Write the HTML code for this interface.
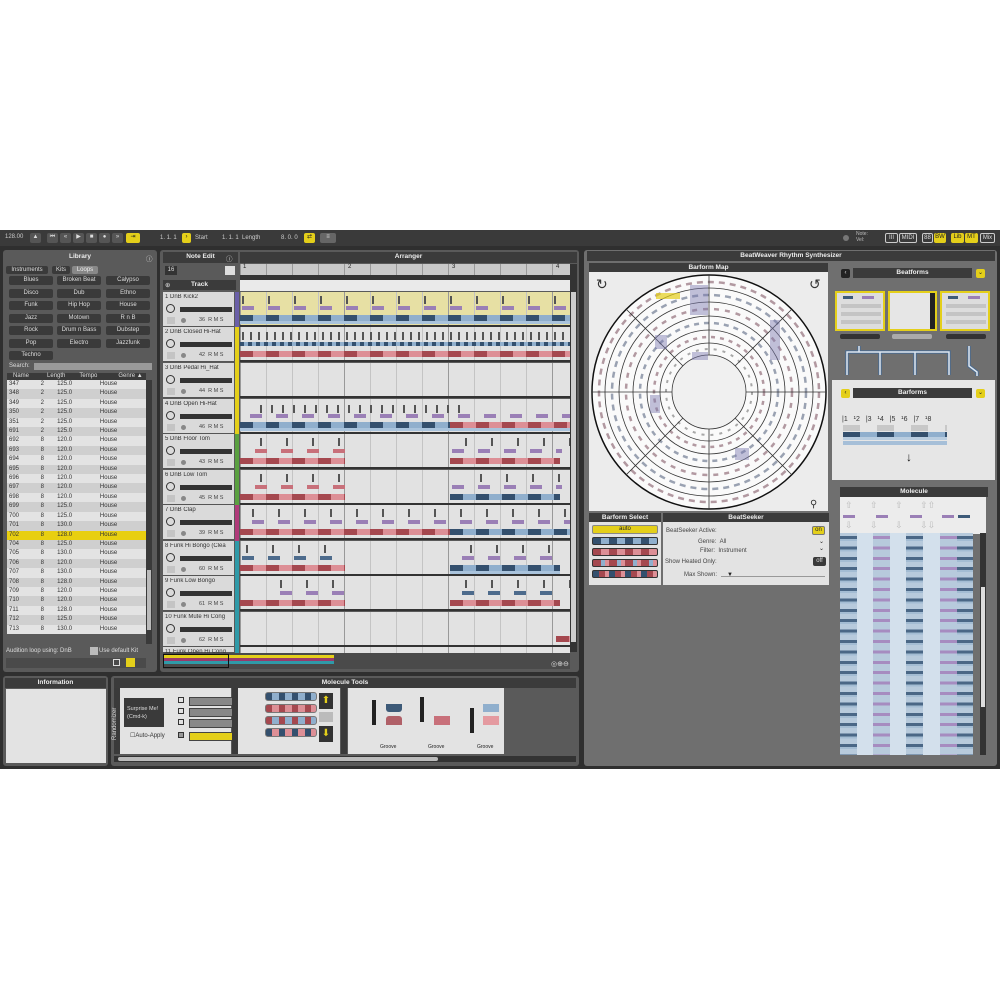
<!DOCTYPE html>
<html><head><meta charset="utf-8"><style>
*{margin:0;padding:0;box-sizing:border-box}
body{width:1000px;height:1000px;background:#fff;position:relative;overflow:hidden;font-family:"Liberation Sans",sans-serif;font-size:6.5px;color:#222}
.a{position:absolute}
.hd{position:absolute;background:#3b3b3b;color:#eee;font-weight:bold;text-align:center;font-size:6.5px;line-height:10px}
.btn{position:absolute;background:#3a3a3a;color:#ddd;text-align:center;font-size:6px;line-height:9px;border-radius:2px}
.y{background:#e4cf1a;color:#222}
.tr{position:absolute;left:163px;width:71px;height:35px;background:#dadada;border-bottom:1px solid #555}
.tr .n{position:absolute;left:2px;top:2px;font-size:6px;color:#333;white-space:nowrap;overflow:hidden;width:62px}
.tr .k{position:absolute;left:3px;top:12px;width:9px;height:9px;border:1.5px solid #333;border-radius:50%}
.tr .s{position:absolute;left:17px;top:15px;width:52px;height:5px;background:#333}
.tr .sq{position:absolute;left:4px;top:25px;width:8px;height:7px;background:#c4c4c4}
.tr .d{position:absolute;left:18px;top:26px;width:5px;height:5px;border-radius:50%;background:#888}
.tr .r{position:absolute;left:36px;top:25px;font-size:5.5px;color:#444}
.row{position:absolute;left:240px;width:330px;height:35px;background:#e2e2e2;border-bottom:2px solid #333;overflow:hidden}
.g{position:absolute;inset:0;background:repeating-linear-gradient(90deg,#999 0 1px,transparent 1px 104px),repeating-linear-gradient(90deg,#c4c4c4 0 1px,transparent 1px 26px)}
.st{position:absolute;height:6px}
.bl{background:repeating-linear-gradient(90deg,#34506e 0 13px,#90afcd 13px 26px)}
.pk{background:repeating-linear-gradient(90deg,#a5484f 0 13px,#dd8f96 13px 26px)}
.pu{position:absolute;height:4px;background:repeating-linear-gradient(90deg,#9a7fb6 0 12px,transparent 12px 26px)}
.tk{position:absolute;height:8px;background:repeating-linear-gradient(90deg,#555 0 2px,transparent 2px 26px)}
.lib td{padding:0 2px;height:9.4px;line-height:9.4px;font-size:6px;color:#333}
.lib tr:nth-child(odd){background:#e3e3e3}.lib tr:nth-child(even){background:#cfcfcf}
.mc{position:absolute;top:533px;height:222px;background:repeating-linear-gradient(180deg,transparent 0 3px,#4a6786 3px 6px,#a3bcd3 6px 8px,transparent 8px 10.4px) #b7cadc}
.mp{background:repeating-linear-gradient(180deg,transparent 0 3px,#a68cc0 3px 6px,transparent 6px 10.4px) #b7cadc}
</style></head><body>
<div class="a" style="left:0;top:230px;width:1000px;height:539px;background:#2f2f2f"></div>
<div class="a" style="left:0;top:230px;width:1000px;height:16px;background:#3a3a3a"></div>
<div class="a" style="left:5px;top:234px;color:#ccc;font-size:6px">128.00</div>
<div class="btn" style="left:30px;top:233px;width:11px;height:10px;background:#555">▲</div>
<div class="btn" style="left:47px;top:233px;width:11px;height:10px;background:#555">⏮</div>
<div class="btn" style="left:60px;top:233px;width:11px;height:10px;background:#555">«</div>
<div class="btn" style="left:73px;top:233px;width:11px;height:10px;background:#555">▶</div>
<div class="btn" style="left:86px;top:233px;width:11px;height:10px;background:#555">■</div>
<div class="btn" style="left:99px;top:233px;width:11px;height:10px;background:#555">●</div>
<div class="btn" style="left:112px;top:233px;width:11px;height:10px;background:#555">»</div>
<div class="btn y" style="left:126px;top:233px;width:14px;height:10px">⇥</div>
<div class="a" style="left:160px;top:235px;color:#ccc;font-size:6px">1. 1. 1</div>
<div class="btn y" style="left:182px;top:233px;width:9px;height:10px">›</div>
<div class="a" style="left:195px;top:235px;color:#ccc;font-size:6px">Start</div>
<div class="a" style="left:222px;top:235px;color:#ccc;font-size:6px">1. 1. 1 &nbsp;Length</div>
<div class="a" style="left:281px;top:235px;color:#ccc;font-size:6px">8. 0. 0</div>
<div class="btn y" style="left:304px;top:233px;width:11px;height:10px">⇄</div>
<div class="btn" style="left:320px;top:233px;width:16px;height:10px;background:#666">≡</div>
<div class="a" style="left:843px;top:235px;width:6px;height:6px;border-radius:50%;background:#777"></div>
<div class="a" style="left:856px;top:231px;color:#bbb;font-size:5px;line-height:6px">Note:<br>Vel:</div>
<div class="btn" style="left:885px;top:233px;width:13px;height:10px;border:1px solid #ccc">III</div>
<div class="btn" style="left:899px;top:233px;width:18px;height:10px;border:1px solid #ccc">MIDI</div>
<div class="btn" style="left:922px;top:233px;width:11px;height:10px;border:1px solid #ccc">88</div>
<div class="btn y" style="left:934px;top:233px;width:12px;height:10px">BW</div>
<div class="btn y" style="left:951px;top:233px;width:13px;height:10px">Lib</div>
<div class="btn y" style="left:965px;top:233px;width:13px;height:10px">MT</div>
<div class="btn" style="left:980px;top:233px;width:15px;height:10px;border:1px solid #ccc">Mix</div>

<div class="a" style="left:3px;top:250px;width:154px;height:422px;background:#5a5a5a;border-radius:3px"></div>
<div class="hd" style="left:5px;top:252px;width:150px;height:11px;background:#5a5a5a">Library</div>
<div class="a" style="left:146px;top:253px;color:#ddd">ⓘ</div>
<div class="btn" style="left:6px;top:266px;width:42px;height:8px;line-height:8px">Instruments</div>
<div class="btn" style="left:52px;top:266px;width:18px;height:8px;line-height:8px">Kits</div>
<div class="btn" style="left:72px;top:266px;width:26px;height:8px;line-height:8px;background:#888;color:#eee">Loops</div>
<div class="btn" style="left:9px;top:276px;width:44px;height:9px">Blues</div>
<div class="btn" style="left:57px;top:276px;width:44px;height:9px">Broken Beat</div>
<div class="btn" style="left:106px;top:276px;width:44px;height:9px">Calypso</div>
<div class="btn" style="left:9px;top:289px;width:44px;height:9px">Disco</div>
<div class="btn" style="left:57px;top:289px;width:44px;height:9px">Dub</div>
<div class="btn" style="left:106px;top:289px;width:44px;height:9px">Ethno</div>
<div class="btn" style="left:9px;top:301px;width:44px;height:9px">Funk</div>
<div class="btn" style="left:57px;top:301px;width:44px;height:9px">Hip Hop</div>
<div class="btn" style="left:106px;top:301px;width:44px;height:9px">House</div>
<div class="btn" style="left:9px;top:314px;width:44px;height:9px">Jazz</div>
<div class="btn" style="left:57px;top:314px;width:44px;height:9px">Motown</div>
<div class="btn" style="left:106px;top:314px;width:44px;height:9px">R n B</div>
<div class="btn" style="left:9px;top:326px;width:44px;height:9px">Rock</div>
<div class="btn" style="left:57px;top:326px;width:44px;height:9px">Drum n Bass</div>
<div class="btn" style="left:106px;top:326px;width:44px;height:9px">Dubstep</div>
<div class="btn" style="left:9px;top:339px;width:44px;height:9px">Pop</div>
<div class="btn" style="left:57px;top:339px;width:44px;height:9px">Electro</div>
<div class="btn" style="left:106px;top:339px;width:44px;height:9px">Jazzfunk</div>
<div class="btn" style="left:9px;top:351px;width:44px;height:9px">Techno</div>
<div class="a" style="left:9px;top:363px;color:#ddd;font-size:6px">Search:</div>
<div class="a" style="left:34px;top:363px;width:118px;height:7px;background:#999"></div>
<div class="a" style="left:7px;top:373px;width:139px;height:7px;background:#3a3a3a;color:#ddd;font-size:6px;line-height:7px"><span style="margin-left:6px">Name</span><span style="margin-left:18px">Length</span><span style="margin-left:14px">Tempo</span><span style="margin-left:21px">Genre ▲</span></div>
<table class="lib a" style="left:7px;top:380px;width:139px;border-collapse:collapse">
<tr><td>347</td><td>2</td><td>125.0</td><td>House</td></tr>
<tr><td>348</td><td>2</td><td>125.0</td><td>House</td></tr>
<tr><td>349</td><td>2</td><td>125.0</td><td>House</td></tr>
<tr><td>350</td><td>2</td><td>125.0</td><td>House</td></tr>
<tr><td>351</td><td>2</td><td>125.0</td><td>House</td></tr>
<tr><td>691</td><td>2</td><td>125.0</td><td>House</td></tr>
<tr><td>692</td><td>8</td><td>120.0</td><td>House</td></tr>
<tr><td>693</td><td>8</td><td>120.0</td><td>House</td></tr>
<tr><td>694</td><td>8</td><td>120.0</td><td>House</td></tr>
<tr><td>695</td><td>8</td><td>120.0</td><td>House</td></tr>
<tr><td>696</td><td>8</td><td>120.0</td><td>House</td></tr>
<tr><td>697</td><td>8</td><td>120.0</td><td>House</td></tr>
<tr><td>698</td><td>8</td><td>120.0</td><td>House</td></tr>
<tr><td>699</td><td>8</td><td>125.0</td><td>House</td></tr>
<tr><td>700</td><td>8</td><td>125.0</td><td>House</td></tr>
<tr><td>701</td><td>8</td><td>130.0</td><td>House</td></tr>
<tr style="background:#e8cf10"><td>702</td><td>8</td><td>128.0</td><td>House</td></tr>
<tr><td>704</td><td>8</td><td>125.0</td><td>House</td></tr>
<tr><td>705</td><td>8</td><td>130.0</td><td>House</td></tr>
<tr><td>706</td><td>8</td><td>120.0</td><td>House</td></tr>
<tr><td>707</td><td>8</td><td>130.0</td><td>House</td></tr>
<tr><td>708</td><td>8</td><td>128.0</td><td>House</td></tr>
<tr><td>709</td><td>8</td><td>120.0</td><td>House</td></tr>
<tr><td>710</td><td>8</td><td>120.0</td><td>House</td></tr>
<tr><td>711</td><td>8</td><td>128.0</td><td>House</td></tr>
<tr><td>712</td><td>8</td><td>125.0</td><td>House</td></tr>
<tr><td>713</td><td>8</td><td>130.0</td><td>House</td></tr>
</table>
<div class="a" style="left:146px;top:380px;width:6px;height:264px;background:#3a3a3a"></div>
<div class="a" style="left:147px;top:570px;width:4px;height:60px;background:#bbb"></div>
<div class="a" style="left:6px;top:648px;color:#ddd;font-size:6px">Audition loop using: DnB</div>
<div class="a" style="left:90px;top:647px;width:8px;height:8px;background:#bbb"></div>
<div class="a" style="left:99px;top:648px;color:#ddd;font-size:6px">Use default Kit</div>
<div class="a" style="left:6px;top:658px;width:140px;height:10px;background:#4a4a4a"></div>
<div class="a" style="left:113px;top:659px;width:7px;height:7px;border:1px solid #ddd"></div>
<div class="a" style="left:126px;top:658px;width:9px;height:9px;background:#e4cf1a"></div>

<div class="a" style="left:160px;top:250px;width:419px;height:422px;background:#5a5a5a;border-radius:3px"></div>
<div class="hd" style="left:163px;top:252px;width:75px;height:11px">Note Edit</div>
<div class="hd" style="left:240px;top:252px;width:337px;height:11px">Arranger</div>
<div class="a" style="left:226px;top:253px;color:#ddd">ⓘ</div>
<div class="a" style="left:165px;top:266px;width:12px;height:9px;background:#333;color:#ddd;font-size:6px;text-align:center;line-height:9px">16</div>
<div class="a" style="left:225px;top:266px;width:10px;height:9px;background:#ddd"></div>
<div class="hd" style="left:163px;top:280px;width:73px;height:10px">Track</div>
<div class="a" style="left:165px;top:281px;color:#ddd">⊕</div>
<div class="a" style="left:240px;top:264px;width:330px;height:11px;background:repeating-linear-gradient(90deg,#999 0 1px,transparent 1px 26px) #c8c8c8"></div>
<div class="a" style="left:243px;top:264px;font-size:6px">1</div><div class="a" style="left:348px;top:264px;font-size:6px">2</div><div class="a" style="left:452px;top:264px;font-size:6px">3</div><div class="a" style="left:556px;top:264px;font-size:6px">4</div>
<div class="a" style="left:240px;top:275px;width:330px;height:5px;background:#333"></div>
<div class="a" style="left:240px;top:280px;width:330px;height:11px;background:#eaeaea"></div>
<div class="a" style="left:570px;top:264px;width:7px;height:388px;background:#333"></div>
<div class="a" style="left:571px;top:292px;width:5px;height:350px;background:#ccc"></div>

<div class="tr" style="top:292px"><div class="n">1 DnB Kick2</div><div class="k"></div><div class="s"></div><div class="sq"></div><div class="d"></div><div class="r">36 &nbsp;R M S</div></div>
<div class="tr" style="top:327px"><div class="n">2 DnB Closed Hi-Hat</div><div class="k"></div><div class="s"></div><div class="sq"></div><div class="d"></div><div class="r">42 &nbsp;R M S</div></div>
<div class="tr" style="top:363px"><div class="n">3 DnB Pedal Hi_Hat</div><div class="k"></div><div class="s"></div><div class="sq"></div><div class="d"></div><div class="r">44 &nbsp;R M S</div></div>
<div class="tr" style="top:399px"><div class="n">4 DnB Open Hi-Hat</div><div class="k"></div><div class="s"></div><div class="sq"></div><div class="d"></div><div class="r">46 &nbsp;R M S</div></div>
<div class="tr" style="top:434px"><div class="n">5 DnB Floor Tom</div><div class="k"></div><div class="s"></div><div class="sq"></div><div class="d"></div><div class="r">43 &nbsp;R M S</div></div>
<div class="tr" style="top:470px"><div class="n">6 DnB Low Tom</div><div class="k"></div><div class="s"></div><div class="sq"></div><div class="d"></div><div class="r">45 &nbsp;R M S</div></div>
<div class="tr" style="top:505px"><div class="n">7 DnB Clap</div><div class="k"></div><div class="s"></div><div class="sq"></div><div class="d"></div><div class="r">39 &nbsp;R M S</div></div>
<div class="tr" style="top:541px"><div class="n">8 Funk Hi Bongo (Clea</div><div class="k"></div><div class="s"></div><div class="sq"></div><div class="d"></div><div class="r">60 &nbsp;R M S</div></div>
<div class="tr" style="top:576px"><div class="n">9 Funk Low Bongo</div><div class="k"></div><div class="s"></div><div class="sq"></div><div class="d"></div><div class="r">61 &nbsp;R M S</div></div>
<div class="tr" style="top:612px"><div class="n">10 Funk Mute Hi Cong</div><div class="k"></div><div class="s"></div><div class="sq"></div><div class="d"></div><div class="r">62 &nbsp;R M S</div></div>
<div class="tr" style="top:647px;height:6px"><div class="n">11 Funk Open Hi Cong</div></div>
<div class="a" style="left:235px;top:292px;width:4px;height:142px;background:#e4cf1a"></div>
<div class="a" style="left:235px;top:292px;width:4px;height:35px;background:#6a5fa8"></div>
<div class="a" style="left:235px;top:434px;width:4px;height:71px;background:#5aa040"></div>
<div class="a" style="left:235px;top:505px;width:4px;height:36px;background:#b03a7a"></div>
<div class="a" style="left:235px;top:541px;width:4px;height:112px;background:#2f9aa8"></div>

<div class="row" style="top:292px;background:#e7e0a4"><div class="g"></div><div class="tk" style="left:2px;width:328px;top:4px"></div><div class="pu" style="left:2px;width:328px;top:14px"></div><div class="st bl" style="left:0;width:330px;top:23px"></div><div class="a" style="left:0;top:29px;width:330px;height:3px;background:#a9c3dc"></div></div>
<div class="row" style="top:327px"><div class="g"></div><div class="tk" style="left:2px;width:328px;top:5px;background:repeating-linear-gradient(90deg,#555 0 2px,transparent 2px 8px)"></div><div class="st bl" style="left:0;width:330px;top:15px;height:4px;background:repeating-linear-gradient(90deg,#34506e 0 4px,#90afcd 4px 8px)"></div><div class="st pk" style="left:0;width:330px;top:24px"></div></div>
<div class="row" style="top:363px"><div class="g"></div></div>
<div class="row" style="top:399px"><div class="g"></div><div class="tk" style="left:20px;width:200px;top:6px;background:repeating-linear-gradient(90deg,#555 0 2px,transparent 2px 11px)"></div><div class="pu" style="left:10px;width:320px;top:15px"></div><div class="st bl" style="left:0;width:210px;top:23px"></div><div class="st pk" style="left:210px;width:120px;top:23px"></div><div class="a" style="left:0;top:29px;width:330px;height:3px;background:#a9c3dc"></div></div>
<div class="row" style="top:434px"><div class="g"></div><div class="tk" style="left:20px;width:85px;top:4px"></div><div class="tk" style="left:225px;width:105px;top:4px"></div><div class="pu" style="left:15px;width:90px;top:15px;background:repeating-linear-gradient(90deg,#c8707a 0 12px,transparent 12px 26px)"></div><div class="pu" style="left:212px;width:110px;top:15px"></div><div class="st pk" style="left:0;width:105px;top:24px"></div><div class="st pk" style="left:210px;width:110px;top:24px"></div></div>
<div class="row" style="top:470px"><div class="g"></div><div class="tk" style="left:20px;width:85px;top:4px"></div><div class="tk" style="left:240px;width:90px;top:4px"></div><div class="pu" style="left:15px;width:90px;top:15px;background:repeating-linear-gradient(90deg,#c8707a 0 12px,transparent 12px 26px)"></div><div class="pu" style="left:212px;width:110px;top:15px"></div><div class="st pk" style="left:0;width:105px;top:24px"></div><div class="st bl" style="left:210px;width:110px;top:24px"></div></div>
<div class="row" style="top:505px"><div class="g"></div><div class="tk" style="left:12px;width:318px;top:4px"></div><div class="pu" style="left:12px;width:318px;top:15px"></div><div class="st pk" style="left:0;width:210px;top:24px"></div><div class="st bl" style="left:210px;width:120px;top:24px"></div></div>
<div class="row" style="top:541px"><div class="g"></div><div class="tk" style="left:6px;width:99px;top:4px"></div><div class="tk" style="left:230px;width:100px;top:4px"></div><div class="pu" style="left:2px;width:103px;top:15px;background:repeating-linear-gradient(90deg,#4d6b8c 0 12px,transparent 12px 26px)"></div><div class="pu" style="left:222px;width:100px;top:15px"></div><div class="st pk" style="left:0;width:105px;top:24px"></div><div class="st bl" style="left:210px;width:110px;top:24px"></div><div class="a" style="left:210px;top:30px;width:110px;height:3px;background:#a9c3dc"></div></div>
<div class="row" style="top:576px"><div class="g"></div><div class="tk" style="left:40px;width:65px;top:4px"></div><div class="tk" style="left:225px;width:105px;top:4px"></div><div class="pu" style="left:40px;width:65px;top:15px"></div><div class="pu" style="left:222px;width:100px;top:15px;background:repeating-linear-gradient(90deg,#4d6b8c 0 12px,transparent 12px 26px)"></div><div class="st pk" style="left:0;width:105px;top:24px"></div><div class="st pk" style="left:210px;width:110px;top:24px"></div></div>
<div class="row" style="top:612px"><div class="g"></div><div class="st pk" style="left:316px;width:14px;top:24px"></div></div>
<div class="row" style="top:647px;height:6px;border:none"><div class="g"></div></div>
<div class="a" style="left:163px;top:653px;width:407px;height:16px;background:#4a4a4a"></div>
<div class="a" style="left:164px;top:655px;width:170px;height:3px;background:#e4cf1a"></div>
<div class="a" style="left:164px;top:658px;width:170px;height:3px;background:#9a3a6a"></div>
<div class="a" style="left:164px;top:661px;width:170px;height:3px;background:#2f9aa8"></div>
<div class="a" style="left:163px;top:654px;width:66px;height:14px;border:1.5px solid #111"></div>
<div class="a" style="left:551px;top:660px;color:#ddd;font-size:7px">◎⊕⊖</div>

<div class="a" style="left:3px;top:676px;width:105px;height:90px;background:#5a5a5a;border-radius:3px"></div>
<div class="hd" style="left:5px;top:678px;width:101px;height:10px">Information</div>
<div class="a" style="left:6px;top:689px;width:100px;height:74px;background:#e3e3e3"></div>
<div class="a" style="left:111px;top:676px;width:468px;height:90px;background:#5a5a5a;border-radius:3px"></div>
<div class="hd" style="left:114px;top:678px;width:462px;height:10px">Molecule Tools</div>
<div class="a" style="left:114px;top:688px;width:6px;height:66px;background:#3a3a3a"></div>
<div class="a" style="left:120px;top:688px;width:111px;height:66px;background:#e3e3e3"></div>
<div class="a" style="left:112px;top:740px;transform:rotate(-90deg);transform-origin:left top;color:#ddd;font-size:6px;white-space:nowrap">Randomizer</div>
<div class="a" style="left:124px;top:698px;width:40px;height:29px;background:#3a3a3a;color:#ddd;font-size:5.5px;padding:7px 3px;line-height:8px;white-space:nowrap">Surprise Me!<br>(Cmd-k)</div>
<div class="a" style="left:130px;top:732px;font-size:6px;color:#333">☐Auto-Apply</div>
<div class="a" style="left:178px;top:697px;width:6px;height:6px;border:1px solid #333"></div>
<div class="a" style="left:178px;top:708px;width:6px;height:6px;border:1px solid #333"></div>
<div class="a" style="left:178px;top:719px;width:6px;height:6px;border:1px solid #333"></div>
<div class="a" style="left:178px;top:732px;width:6px;height:6px;border:1px solid #333;background:#999"></div>
<div class="a" style="left:189px;top:697px;width:53px;height:9px;background:#888;border:1px solid #444"></div>
<div class="a" style="left:189px;top:708px;width:53px;height:9px;background:#888;border:1px solid #444"></div>
<div class="a" style="left:189px;top:719px;width:53px;height:9px;background:#888;border:1px solid #444"></div>
<div class="a" style="left:189px;top:732px;width:53px;height:9px;background:#e4cf1a;border:1px solid #444"></div>
<div class="a" style="left:247px;top:697px;width:9px;height:8px;background:#333;border-radius:2px"></div>
<div class="a" style="left:247px;top:708px;width:9px;height:8px;background:#333;border-radius:2px"></div>
<div class="a" style="left:247px;top:719px;width:9px;height:8px;background:#333;border-radius:2px"></div>
<div class="a" style="left:232px;top:688px;width:6px;height:66px;background:#3a3a3a"></div>
<div class="a" style="left:238px;top:688px;width:102px;height:66px;background:#e3e3e3"></div>
<div class="a" style="left:265px;top:692px;width:52px;height:9px;border-radius:3px;border:1px solid #777;background:repeating-linear-gradient(90deg,#34506e 0 6px,#90afcd 6px 13px)"></div>
<div class="a" style="left:265px;top:704px;width:52px;height:9px;border-radius:3px;border:1px solid #777;background:repeating-linear-gradient(90deg,#a5484f 0 6px,#dd8f96 6px 13px)"></div>
<div class="a" style="left:265px;top:716px;width:52px;height:9px;border-radius:3px;border:1px solid #777;background:repeating-linear-gradient(90deg,#a5484f 0 6px,#90afcd 6px 13px)"></div>
<div class="a" style="left:265px;top:728px;width:52px;height:9px;border-radius:3px;border:1px solid #777;background:repeating-linear-gradient(90deg,#34506e 0 6px,#dd8f96 6px 13px)"></div>
<div class="a" style="left:319px;top:693px;width:14px;height:16px;background:#333;color:#e4cf1a;text-align:center;font-size:10px;line-height:16px">⬆</div>
<div class="a" style="left:319px;top:712px;width:14px;height:10px;background:#bbb"></div>
<div class="a" style="left:319px;top:726px;width:14px;height:16px;background:#333;color:#e4cf1a;text-align:center;font-size:10px;line-height:16px">⬇</div>
<div class="a" style="left:341px;top:688px;width:6px;height:66px;background:#3a3a3a"></div>
<div class="a" style="left:348px;top:688px;width:156px;height:66px;background:#e3e3e3"></div>
<div class="a" style="left:386px;top:704px;width:16px;height:8px;background:#3d5a78;border-radius:0 0 3px 3px"></div>
<div class="a" style="left:386px;top:716px;width:16px;height:9px;background:#b06068;border-radius:3px 3px 0 0"></div>
<div class="a" style="left:434px;top:716px;width:16px;height:9px;background:#c8707a"></div>
<div class="a" style="left:483px;top:704px;width:16px;height:8px;background:#90afcd"></div>
<div class="a" style="left:483px;top:716px;width:16px;height:9px;background:#e49aa0"></div>
<div class="a" style="left:372px;top:700px;width:4px;height:25px;background:#222"></div>
<div class="a" style="left:420px;top:697px;width:4px;height:25px;background:#222"></div>
<div class="a" style="left:470px;top:708px;width:4px;height:25px;background:#222"></div>
<div class="a" style="left:380px;top:744px;font-size:5px">Groove</div>
<div class="a" style="left:428px;top:744px;font-size:5px">Groove</div>
<div class="a" style="left:477px;top:744px;font-size:5px">Groove</div>
<div class="a" style="left:505px;top:688px;width:71px;height:66px;background:#5a5a5a"></div>
<div class="a" style="left:114px;top:756px;width:462px;height:6px;background:#333"></div>
<div class="a" style="left:118px;top:757px;width:320px;height:4px;background:#bbb;border-radius:2px"></div>

<div class="a" style="left:584px;top:250px;width:413px;height:516px;background:#6f6f6f;border-radius:3px"></div>
<div class="hd" style="left:587px;top:251px;width:408px;height:10px">BeatWeaver Rhythm Synthesizer</div>
<div class="hd" style="left:589px;top:263px;width:239px;height:9px;line-height:9px">Barform Map</div>
<div class="a" style="left:589px;top:272px;width:239px;height:239px;background:#ececec"></div>
<svg class="a" style="left:589px;top:272px" width="239" height="239" viewBox="589 272 239 239">
<g fill="none">
<circle cx="709" cy="392" r="117" fill="#fafafa" stroke="#111" stroke-width="1.5"/>
<circle cx="709" cy="392" r="104" stroke="#333" stroke-width="0.8"/>
<circle cx="709" cy="392" r="90" stroke="#333" stroke-width="0.8"/>
<circle cx="709" cy="392" r="76" stroke="#333" stroke-width="0.8"/>
<circle cx="709" cy="392" r="62" stroke="#333" stroke-width="0.8"/>
<circle cx="709" cy="392" r="49" stroke="#333" stroke-width="0.8"/>
<circle cx="709" cy="392" r="37" fill="#f0f0f0" stroke="#333" stroke-width="0.8"/>
<circle cx="709" cy="392" r="110" stroke="#6a3848" stroke-width="2.5" stroke-dasharray="6 5" opacity=".5"/>
<circle cx="709" cy="392" r="97" stroke="#3a4a6a" stroke-width="2.5" stroke-dasharray="6 5" opacity=".5"/>
<circle cx="709" cy="392" r="83" stroke="#6a3848" stroke-width="2.5" stroke-dasharray="5 6" opacity=".5"/>
<circle cx="709" cy="392" r="69" stroke="#3a4a6a" stroke-width="2.5" stroke-dasharray="5 5" opacity=".5"/>
<circle cx="709" cy="392" r="55" stroke="#6a3848" stroke-width="2.5" stroke-dasharray="4 5" opacity=".5"/>
<circle cx="709" cy="392" r="43" stroke="#555" stroke-width="2" stroke-dasharray="3 6" opacity=".5"/>
<g stroke="#333" stroke-width="0.8">
<line x1="709" y1="275" x2="709" y2="355"/><line x1="709" y1="429" x2="709" y2="509"/>
<line x1="592" y1="392" x2="672" y2="392"/><line x1="746" y1="392" x2="826" y2="392"/>
<line x1="626" y1="309" x2="683" y2="366"/><line x1="792" y1="309" x2="735" y2="366"/>
<line x1="626" y1="475" x2="683" y2="418"/><line x1="792" y1="475" x2="735" y2="418"/>
</g>
<g fill="#7a78b0" opacity=".45">
<rect x="690" y="285" width="18" height="30"/><rect x="655" y="335" width="12" height="14"/><rect x="650" y="395" width="10" height="18"/><rect x="735" y="448" width="14" height="12"/><rect x="770" y="320" width="10" height="40"/><rect x="692" y="352" width="16" height="8"/>
</g>
<rect x="656" y="293" width="24" height="6" fill="#e4cf1a" opacity=".7"/>
</g>
<text x="596" y="289" font-size="14" fill="#333" font-family="DejaVu Sans">↻</text>
<text x="809" y="289" font-size="14" fill="#333" font-family="DejaVu Sans">↺</text>
<text x="810" y="507" font-size="10" fill="#333" font-family="DejaVu Sans">⚲</text>
</svg>
<div class="hd" style="left:589px;top:513px;width:72px;height:9px;line-height:9px">Barform Select</div>
<div class="a" style="left:589px;top:522px;width:72px;height:63px;background:#e3e3e3"></div>
<div class="a" style="left:592px;top:525px;width:66px;height:9px;background:#e4cf1a;border:1px solid #888;border-radius:2px;text-align:center;font-size:6px;line-height:7px">auto</div>
<div class="a" style="left:592px;top:537px;width:66px;height:8px;border:1.5px solid #333;border-radius:2px;background:repeating-linear-gradient(90deg,#34506e 0 8px,#90afcd 8px 16px)"></div>
<div class="a" style="left:592px;top:548px;width:66px;height:8px;border:1.5px solid #333;border-radius:2px;background:repeating-linear-gradient(90deg,#a5484f 0 8px,#dd8f96 8px 16px)"></div>
<div class="a" style="left:592px;top:559px;width:66px;height:8px;border:1.5px solid #333;border-radius:2px;background:repeating-linear-gradient(90deg,#a5484f 0 8px,#90afcd 8px 12px,#dd8f96 12px 16px)"></div>
<div class="a" style="left:592px;top:570px;width:66px;height:8px;border:1.5px solid #333;border-radius:2px;background:repeating-linear-gradient(90deg,#34506e 0 6px,#a5484f 6px 12px,#dd8f96 12px 16px)"></div>
<div class="hd" style="left:663px;top:513px;width:166px;height:9px;line-height:9px">BeatSeeker</div>
<div class="a" style="left:663px;top:522px;width:166px;height:63px;background:#e3e3e3;font-size:6px;color:#444"></div>
<div class="a" style="left:666px;top:528px;font-size:6px;color:#444">BeatSeeker Active:</div>
<div class="a" style="left:812px;top:526px;width:13px;height:9px;background:#e4cf1a;border:1px solid #777;border-radius:2px;font-size:6px;text-align:center;line-height:7px">on</div>
<div class="a" style="left:698px;top:539px;font-size:6px;color:#444">Genre: &nbsp;All</div>
<div class="a" style="left:700px;top:548px;font-size:6px;color:#444">Filter: &nbsp;Instrument</div>
<div class="a" style="left:819px;top:538px;font-size:6px">⌄<br>⌄</div>
<div class="a" style="left:665px;top:559px;font-size:6px;color:#444">Show Heated Only:</div>
<div class="a" style="left:813px;top:557px;width:13px;height:9px;background:#3a3a3a;color:#ddd;border-radius:2px;font-size:6px;text-align:center;line-height:9px">off</div>
<div class="a" style="left:684px;top:572px;font-size:6px;color:#444">Max Shown:</div>
<div class="a" style="left:721px;top:576px;width:104px;height:1px;background:#999"></div>
<div class="a" style="left:727px;top:572px;font-size:6px">▼</div>

<div class="btn" style="left:841px;top:269px;width:9px;height:9px;background:#222">‹</div>
<div class="hd" style="left:853px;top:268px;width:119px;height:10px">Beatforms</div>
<div class="btn y" style="left:976px;top:269px;width:9px;height:9px">⌄</div>
<div class="a" style="left:835px;top:291px;width:50px;height:40px;background:#ddd;border:2px solid #e4cf1a"></div>
<div class="a" style="left:888px;top:291px;width:49px;height:40px;background:#e6e6e6;border:2px solid #e4cf1a"></div>
<div class="a" style="left:930px;top:293px;width:5px;height:36px;background:#222"></div>
<div class="a" style="left:940px;top:291px;width:50px;height:40px;background:#ddd;border:2px solid #e4cf1a"></div>
<div class="a" style="left:843px;top:296px;width:10px;height:3px;background:#3d5a78"></div><div class="a" style="left:862px;top:296px;width:12px;height:3px;background:#9a7fb6"></div>
<div class="a" style="left:948px;top:296px;width:10px;height:3px;background:#3d5a78"></div><div class="a" style="left:968px;top:296px;width:12px;height:3px;background:#9a7fb6"></div>
<div class="a" style="left:841px;top:304px;width:40px;height:23px;background:repeating-linear-gradient(180deg,#c4c4c4 0 4px,transparent 4px 8px)"></div>
<div class="a" style="left:946px;top:304px;width:40px;height:23px;background:repeating-linear-gradient(180deg,#c4c4c4 0 4px,transparent 4px 8px)"></div>
<div class="a" style="left:840px;top:334px;width:40px;height:5px;background:#333;border-radius:2px"></div>
<div class="a" style="left:892px;top:334px;width:40px;height:5px;background:#aaa;border-radius:2px"></div>
<div class="a" style="left:946px;top:334px;width:40px;height:5px;background:#333;border-radius:2px"></div>
<svg class="a" style="left:835px;top:345px" width="160" height="35" viewBox="0 0 160 35">
<g fill="none" stroke="#4a6a8e" stroke-width="3.5"><path d="M12 30V7h102v23M45 7v23M80 7v23M24 7V1"/><path d="M134 1v20l8 6v4"/></g>
<g fill="none" stroke="#dfe8f1" stroke-width="1.5"><path d="M12 30V7h102v23M45 7v23M80 7v23M24 7V1"/><path d="M134 1v20l8 6v4"/></g>
</svg>
<div class="a" style="left:832px;top:380px;width:163px;height:100px;background:#e6e6e6"></div>
<div class="btn y" style="left:841px;top:389px;width:9px;height:9px">‹</div>
<div class="hd" style="left:853px;top:388px;width:119px;height:10px">Barforms</div>
<div class="btn y" style="left:976px;top:389px;width:9px;height:9px">⌄</div>
<div class="a" style="left:842px;top:416px;font-size:7px;color:#333;word-spacing:4px">|1 ¹2 |3 ¹4 |5 ¹6 |7 ¹8</div>
<div class="a" style="left:843px;top:425px;width:104px;height:6px;background:repeating-linear-gradient(90deg,#c8c8c8 0 17px,transparent 17px 34px)"></div>
<div class="a" style="left:843px;top:432px;width:104px;height:5px;background:repeating-linear-gradient(90deg,#34506e 0 17px,#90afcd 17px 34px)"></div>
<div class="a" style="left:843px;top:437px;width:104px;height:3px;background:#b9cde0"></div>
<div class="a" style="left:843px;top:441px;width:104px;height:4px;background:#a6bfd8"></div>
<div class="a" style="left:906px;top:450px;font-size:12px;color:#111">↓</div>
<div class="hd" style="left:840px;top:487px;width:148px;height:10px">Molecule</div>
<div class="a" style="left:840px;top:497px;width:146px;height:37px;background:#ececec"></div>
<div class="a" style="left:840px;top:533px;width:133px;height:222px;background:#d3e0ec"></div>
<div class="a" style="left:845px;top:500px;font-size:9px;color:#bbb;word-spacing:15px">⇧ ⇧ ⇧ ⇧⇧</div>
<div class="a" style="left:845px;top:520px;font-size:9px;color:#bbb;word-spacing:15px">⇩ ⇩ ⇩ ⇩⇩</div>
<div class="a" style="left:843px;top:515px;width:12px;height:3px;background:#9a7fb6"></div>
<div class="a" style="left:876px;top:515px;width:12px;height:3px;background:#9a7fb6"></div>
<div class="a" style="left:910px;top:515px;width:12px;height:3px;background:#9a7fb6"></div>
<div class="a" style="left:942px;top:515px;width:12px;height:3px;background:#9a7fb6"></div>
<div class="a" style="left:958px;top:515px;width:12px;height:3px;background:#3d5a78"></div>
<div class="mc" style="left:840px;width:17px"></div>
<div class="mc mp" style="left:873px;width:17px"></div>
<div class="mc" style="left:906px;width:17px"></div>
<div class="mc mp" style="left:940px;width:17px"></div>
<div class="mc" style="left:957px;width:16px"></div>
<div class="a" style="left:980px;top:533px;width:6px;height:222px;background:#333"></div>
<div class="a" style="left:981px;top:587px;width:4px;height:120px;background:#ddd"></div>
</body></html>
